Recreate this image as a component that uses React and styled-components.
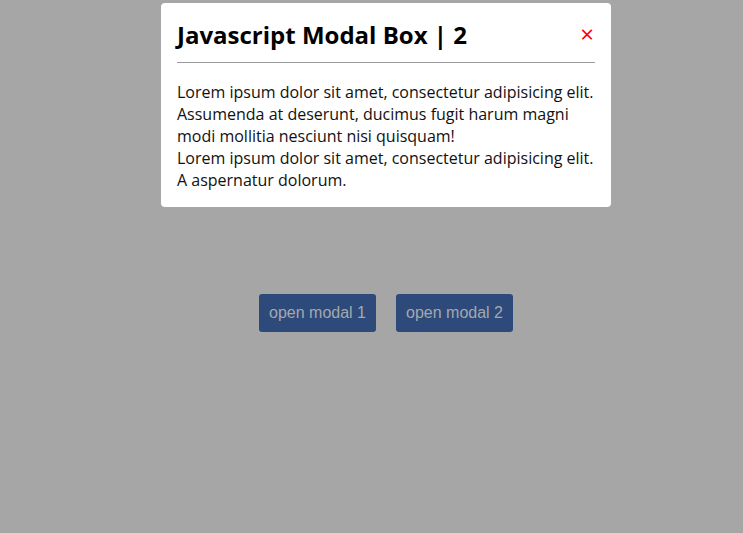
import React, { useState } from "react";
import styled, { createGlobalStyle } from "styled-components";

const GlobalStyle = createGlobalStyle`
  body {
    margin: 0;
    background: #a6a6a6;
    font-family: "Open Sans", sans-serif;
  }
`;

const Page = styled.div`
  min-height: 100vh;
  box-sizing: border-box;
  display: flex;
  justify-content: center;
  align-items: flex-start;
  gap: 20px;
  padding: 294px 0 0 29px;
`;

const OpenButton = styled.button`
  width: 117px;
  height: 38px;
  border: none;
  border-radius: 3px;
  background: #2d4a7a;
  color: #a4a8ae;
  font-family: "Liberation Sans", Arial, sans-serif;
  font-size: 16px;
  cursor: pointer;
`;

const Overlay = styled.div`
  position: fixed;
  inset: 0;
  display: flex;
  justify-content: center;
  align-items: flex-start;
  padding-left: 29px;
`;

const Modal = styled.div`
  margin-top: 3px;
  width: 450px;
  box-sizing: border-box;
  padding: 16px;
  background: #fff;
  border-radius: 4px;
`;

const Header = styled.div`
  display: flex;
  justify-content: space-between;
  align-items: center;
  padding-bottom: 11px;
  border-bottom: 1px solid #9a9a9a;
`;

const Title = styled.h2`
  margin: 0;
  font-size: 24px;
  line-height: 32px;
  font-weight: 700;
  color: #000;
`;

const Close = styled.span`
  color: #f00;
  font-size: 24px;
  line-height: 24px;
  margin: 0 1px 2px 0;
  cursor: pointer;
`;

const Body = styled.p`
  margin: 18px 0 0;
  font-size: 16px;
  line-height: 22px;
  color: #111;
`;

const modals = {
  1: "Javascript Modal Box | 1",
  2: "Javascript Modal Box | 2",
};

export default function App() {
  const [open, setOpen] = useState(2);
  return (
    <>
      <GlobalStyle />
      <Page>
        <OpenButton onClick={() => setOpen(1)}>open modal 1</OpenButton>
        <OpenButton onClick={() => setOpen(2)}>open modal 2</OpenButton>
      </Page>
      {open && (
        <Overlay>
          <Modal>
            <Header>
              <Title>{modals[open]}</Title>
              <Close onClick={() => setOpen(null)}>×</Close>
            </Header>
            <Body>
              Lorem ipsum dolor sit amet, consectetur adipisicing elit. Assumenda
              at deserunt, ducimus fugit harum magni modi mollitia nesciunt nisi
              quisquam!
              <br />
              Lorem ipsum dolor sit amet, consectetur adipisicing elit. A
              aspernatur dolorum.
            </Body>
          </Modal>
        </Overlay>
      )}
    </>
  );
}
